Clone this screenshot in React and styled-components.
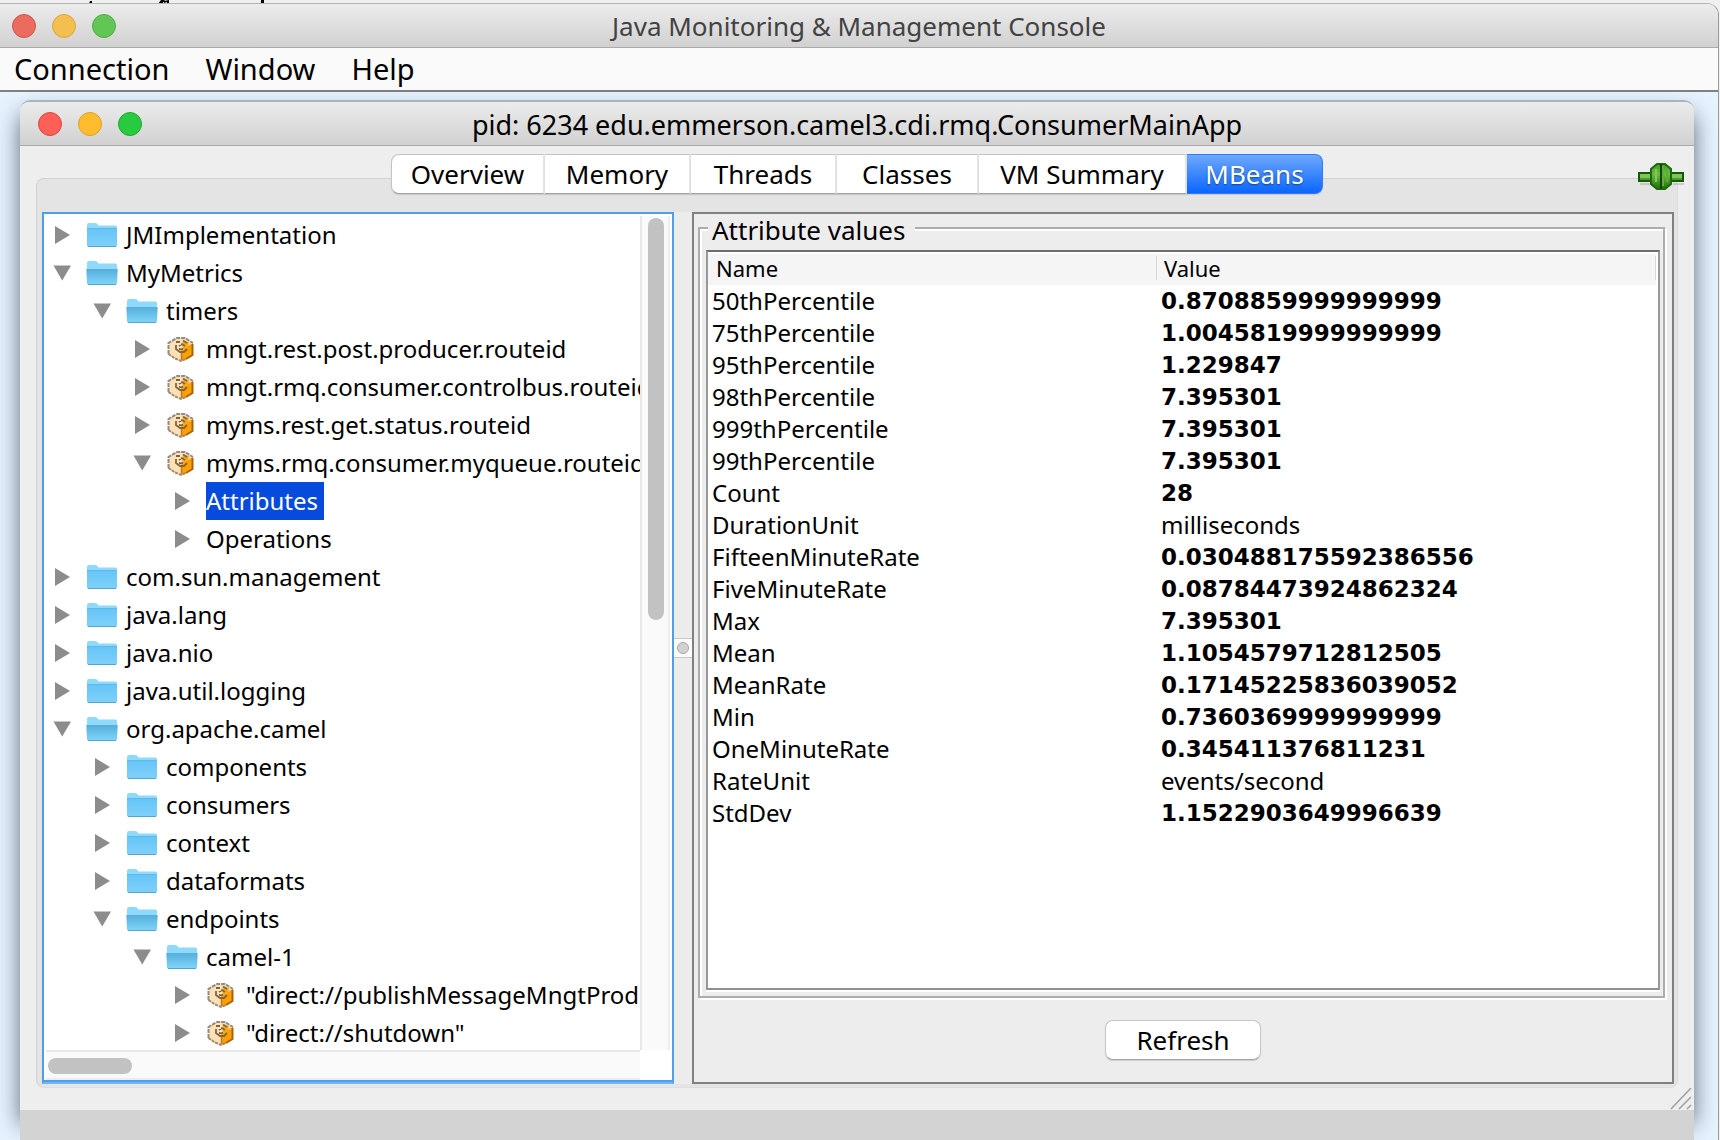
import React from "react";
import styled, { createGlobalStyle, css } from "styled-components";

const GlobalStyle = createGlobalStyle`
  * { box-sizing: border-box; }
  body {
    margin: 0;
    background: #f0f0f0;
    color: #000;
    font-family: "Noto Sans", "Open Sans", sans-serif;
    font-size: 24px;
  }
  button { font: inherit; color: inherit; }
`;

const Page = styled.div`
  display: flex;
  flex-direction: column;
  height: 100vh;
  min-width: 1200px;
  overflow: hidden;
  padding-right: 1px;
`;

const BackdropStrip = styled.svg`
  display: block;
  flex: none;
  width: 300px;
  height: 3px;
`;

const AppWindow = styled.div`
  flex: 1;
  min-height: 0;
  display: flex;
  flex-direction: column;
  border-top: 1px solid #b4b4b4;
  border-right: 1px solid #9b9b9b;
  border-radius: 0 12px 0 0;
  overflow: hidden;
  background: #e6f2fe;
`;

const TitleBar = styled.header`
  flex: none;
  display: grid;
  grid-template-columns: 160px 1fr 160px;
  align-items: center;
  height: 44px;
  padding: 0 ${(p) => (p.$inner ? "18px" : "12px")};
  background: linear-gradient(#ececec, #d1d1d1);
  border-bottom: 1px solid #aaa;
`;

const Title = styled.h1`
  margin: 0;
  padding-top: ${(p) => (p.$inner ? "2px" : "0")};
  font-size: ${(p) => (p.$inner ? "27px" : "26px")};
  line-height: 40px;
  font-weight: 400;
  text-align: center;
  white-space: nowrap;
  color: ${(p) => (p.$inner ? "#000" : "#424242")};
`;

const Lights = styled.div`
  display: flex;
  gap: 16px;
`;

const Light = styled.button`
  width: 24px;
  height: 24px;
  padding: 0;
  border-radius: 50%;
  border: 1px solid ${(p) => p.$edge};
  background: ${(p) => p.$fill};
`;

const MenuBar = styled.nav`
  flex: none;
  display: flex;
  gap: 36px;
  height: 44px;
  padding: 0 14px;
  background: #fafafa;
  border-bottom: 2px solid #808080;
`;

const MenuItem = styled.button`
  padding: 0;
  border: 0;
  background: none;
  font-size: 29px;
  line-height: 42px;
`;

const Desktop = styled.div`
  flex: 1;
  min-height: 0;
  display: flex;
  flex-direction: column;
  padding: 8px 24px 0 20px;
`;

const InnerWindow = styled.section`
  flex: 1;
  min-height: 0;
  display: flex;
  flex-direction: column;
  border-top: 2px solid #aab4be;
  border-radius: 10px 10px 0 0;
  background: #eee;
  box-shadow: 0 14px 22px rgba(20, 30, 50, 0.65);
`;

const InnerTitleBar = styled(TitleBar)`
  border-radius: 9px 9px 0 0;
`;

const Shelf = styled.div`
  flex: none;
  height: 30px;
  background: #d3d3d3;
  z-index: 1;
`;

const Body = styled.div`
  flex: 1;
  min-height: 0;
  display: flex;
  flex-direction: column;
  padding: 8px 16px 0;
`;

const TabRow = styled.div`
  flex: none;
  display: grid;
  grid-template-columns: 1fr auto 1fr;
  align-items: center;
  height: 40px;
  margin-bottom: -16px;
  z-index: 1;
`;

const Tabs = styled.div`
  grid-column: 2;
  display: flex;
  height: 40px;
`;

const Tab = styled.button`
  width: ${(p) => p.$width}px;
  height: 40px;
  padding: 0;
  border: 1px solid #c4c4c4;
  border-bottom-color: #a4a4a4;
  border-left: 0;
  border-right: 2px solid #e4e4e4;
  background: #fff;
  font-size: 26px;
  line-height: 36px;
  white-space: nowrap;
  box-shadow: 0 1px 1px rgba(0, 0, 0, 0.12);

  &:first-child {
    border-left: 1px solid #c4c4c4;
    border-radius: 8px 0 0 8px;
  }
  &:last-child {
    border-radius: 0 8px 8px 0;
  }
  ${(p) =>
    p.$selected &&
    css`
      border: 1px solid #2f7cf5;
      border-left: 0;
      background: linear-gradient(#6ea8fc, #0a66ff);
      color: #fff;
      text-shadow: 0 1px 2px rgba(0, 0, 0, 0.45);
    `}
`;

const PlugIcon = styled.svg`
  justify-self: end;
  width: 48px;
  height: 30px;
  margin: 5px -7px 0 0;
`;

const TabPanel = styled.main`
  flex: 1;
  min-height: 0;
  display: grid;
  grid-template-columns: 632px 18px minmax(0, 1fr);
  padding: 33px 3px 3px 5px;
  border: 1px solid #d2d2d2;
  border-right-color: #dcdcdc;
  border-bottom-color: #dedede;
  border-radius: 8px;
  background: #e4e4e4;
`;

const TreePane = styled.div`
  min-height: 0;
  display: grid;
  grid-template-columns: minmax(0, 1fr) 30px;
  grid-template-rows: minmax(0, 1fr) 30px;
  padding: 2px;
  border: 2px solid #4da0e8;
  border-bottom-color: #6cb8fb;
  box-shadow: inset 0 -2px 0 #4da0e8;
  background: #fff;
`;

const Tree = styled.ul`
  margin: 0;
  padding: 0;
  list-style: none;
  overflow: hidden;
`;

const TreeRow = styled.li`
  display: flex;
  align-items: center;
  height: 38px;
  padding-left: ${(p) => p.$depth * 40}px;
`;

const Twisty = styled.button`
  flex: none;
  width: 40px;
  height: 38px;
  padding: 0 0 0 6px;
  border: 0;
  background: none;
`;

const TwistyShape = styled.svg`
  display: block;
  width: 20px;
  height: 20px;
`;

const NodeIcon = styled.svg`
  flex: none;
  width: 32px;
  height: 28px;
  margin-right: 8px;
`;

const NodeLabel = styled.span`
  height: 38px;
  line-height: 38px;
  padding-right: 6px;
  white-space: nowrap;
  ${(p) =>
    p.$selected &&
    css`
      background: #064bdc;
      color: #fff;
    `}
`;

const VerticalTrack = styled.div`
  padding: 2px 4px 0 6px;
  border-left: 2px solid #e8e8e8;
  border-right: 2px solid #ededed;
  background: #fafafa;
`;

const VerticalThumb = styled.div`
  height: 402px;
  max-height: 80%;
  border-radius: 8px;
  background: #c2c2c2;
`;

const HorizontalTrack = styled.div`
  padding: 6px 2px 0;
  border-top: 2px solid #e8e8e8;
  border-bottom: 2px solid #ededed;
  background: #fafafa;
`;

const HorizontalThumb = styled.div`
  width: 84px;
  height: 16px;
  border-radius: 8px;
  background: #c2c2c2;
`;

const Divider = styled.div`
  display: flex;
  align-items: center;
  background: #ececec;
`;

const Grip = styled.div`
  flex: 1;
  display: flex;
  justify-content: center;
  align-items: center;
  height: 20px;
  border-top: 1px solid #c8c8c8;
  border-bottom: 1px solid #c8c8c8;
  background: #fcfcfc;
`;

const GripDot = styled.span`
  width: 12px;
  height: 12px;
  border-radius: 50%;
  border: 1px solid #a8a8a8;
  background: #d2d2d2;
`;

const DetailPane = styled.div`
  min-height: 0;
  display: flex;
  flex-direction: column;
  border: 2px solid #808080;
  background: #ededed;
`;

const Group = styled.fieldset`
  flex: 1;
  min-height: 0;
  min-width: 0;
  display: flex;
  flex-direction: column;
  margin: 0 7px 0 4px;
  padding: 8px 3px 6px 6px;
  border: 2px solid #adadad;
  box-shadow: 2px 2px 0 #fff, inset 2px 2px 0 #fff;
`;

const Legend = styled.legend`
  height: 28px;
  margin-left: 2px;
  padding: 4px 10px 0 4px;
  font-size: 26px;
  line-height: 24px;
  background: #ededed;
`;

const TableBox = styled.div`
  flex: 1;
  min-height: 0;
  overflow: hidden;
  padding: 2px 2px 0 0;
  border: 2px solid #989898;
  border-top-color: #6c6c6c;
  border-bottom-color: #909090;
  box-shadow: 0 2px 0 #fff;
  background: #fff;
`;

const Table = styled.table`
  width: 100%;
  table-layout: fixed;
  border-collapse: collapse;
`;

const NameHead = styled.th`
  width: 449px;
  height: 31px;
  padding: 0 0 4px;
  background: #f5f5f5;
`;

const ValueHead = styled(NameHead)`
  width: auto;
`;

const HeadLabel = styled.span`
  display: block;
  height: 24px;
  padding-left: ${(p) => (p.$first ? "8px" : "7px")};
  border-right: 1px solid #d8d8d8;
  font-size: 22px;
  font-weight: 400;
  line-height: 24px;
  text-align: left;
`;

const Cell = styled.td`
  height: 32px;
  padding: 0 0 0 4px;
  line-height: 32px;
  font-size: 24px;
  white-space: nowrap;
  ${(p) =>
    p.$numeric &&
    css`
      font-family: "DejaVu Sans", sans-serif;
      font-size: 23px;
      font-weight: 700;
    `}
`;

const Actions = styled.div`
  flex: none;
  display: flex;
  justify-content: center;
  padding: 22px 0;
`;

const RefreshButton = styled.button`
  width: 156px;
  height: 40px;
  padding: 0;
  border: 1px solid #c6c6c6;
  border-bottom-color: #a6a6a6;
  border-radius: 8px;
  background: #fff;
  box-shadow: 0 1px 1px rgba(0, 0, 0, 0.14);
  font-size: 26px;
  line-height: 36px;
`;

const StatusRow = styled.div`
  flex: none;
  display: flex;
  justify-content: flex-end;
  height: 22px;
  margin-right: -14px;
`;

const ResizeGrip = styled.svg`
  width: 22px;
  height: 22px;
`;

const nodes = [
  [0, "folder", false, "JMImplementation"],
  [0, "folder", true, "MyMetrics"],
  [1, "folder", true, "timers"],
  [2, "bean", false, "mngt.rest.post.producer.routeid"],
  [2, "bean", false, "mngt.rmq.consumer.controlbus.routeid"],
  [2, "bean", false, "myms.rest.get.status.routeid"],
  [2, "bean", true, "myms.rmq.consumer.myqueue.routeid"],
  [3, null, false, "Attributes", true],
  [3, null, false, "Operations"],
  [0, "folder", false, "com.sun.management"],
  [0, "folder", false, "java.lang"],
  [0, "folder", false, "java.nio"],
  [0, "folder", false, "java.util.logging"],
  [0, "folder", true, "org.apache.camel"],
  [1, "folder", false, "components"],
  [1, "folder", false, "consumers"],
  [1, "folder", false, "context"],
  [1, "folder", false, "dataformats"],
  [1, "folder", true, "endpoints"],
  [2, "folder", true, "camel-1"],
  [3, "bean", false, '"direct://publishMessageMngtProducer"'],
  [3, "bean", false, '"direct://shutdown"'],
];

const attributes = [
  ["50thPercentile", "0.8708859999999999"],
  ["75thPercentile", "1.0045819999999999"],
  ["95thPercentile", "1.229847"],
  ["98thPercentile", "7.395301"],
  ["999thPercentile", "7.395301"],
  ["99thPercentile", "7.395301"],
  ["Count", "28"],
  ["DurationUnit", "milliseconds"],
  ["FifteenMinuteRate", "0.030488175592386556"],
  ["FiveMinuteRate", "0.08784473924862324"],
  ["Max", "7.395301"],
  ["Mean", "1.1054579712812505"],
  ["MeanRate", "0.17145225836039052"],
  ["Min", "0.7360369999999999"],
  ["OneMinuteRate", "0.345411376811231"],
  ["RateUnit", "events/second"],
  ["StdDev", "1.1522903649996639"],
];

const tabs = [
  ["Overview", 154],
  ["Memory", 146],
  ["Threads", 146],
  ["Classes", 142],
  ["VM Summary", 208],
  ["MBeans", 136],
];

function FolderIcon({ open }) {
  return (
    <NodeIcon viewBox="0 0 32 28" aria-hidden="true">
      <defs>
        <linearGradient id="folderFront" x1="0" y1="0" x2="0" y2="1">
          <stop offset="0" stopColor="#66c5f8" />
          <stop offset="1" stopColor="#7fd0f9" />
        </linearGradient>
        <linearGradient id="folderOpen" x1="0" y1="0" x2="0" y2="1">
          <stop offset="0" stopColor="#55aeda" />
          <stop offset="1" stopColor="#7fd5fb" />
        </linearGradient>
      </defs>
      <path
        d="M1 4Q1 2 3 2H9.500Q10.500 2 11.300 2.900L12.600 4.500H29.500Q31 4.500 31 6V24Q31 25.500 29.500 25.500H2.500Q1 25.500 1 24Z"
        fill="#8fdafc"
      />
      {open ? (
        <path
          d="M0.3 10H31.7L31 24Q30.8 25.5 29.5 25.5H2.5Q1.2 25.5 1 24Z"
          fill="url(#folderOpen)"
        />
      ) : (
        <path d="M1 8H31V24Q31 25.5 29.5 25.5H2.5Q1 25.5 1 24Z" fill="url(#folderFront)" />
      )}
      {!open && <path d="M1 7.5H31" stroke="#5fb9e8" />}
      <path d="M2 25.5H30" stroke="#56a6cc" />
    </NodeIcon>
  );
}

function BeanIcon() {
  return (
    <NodeIcon viewBox="0 0 32 28" aria-hidden="true">
      <path d="M11 3H19L27 8V20L20 24.500L15 26L9 24L2.500 20V8Z" fill="#fbe0b8" />
      <path d="M15 15L27 8V20L20 24.500L15 26Z" fill="#ff9f00" />
      <path d="M17 6L23 7L22 13L16 16Z" fill="#f7a81c" />
      <path d="M15.500 17V25" stroke="#c07a14" strokeWidth="1.500" />
      <path d="M26.500 9V20L20 24" fill="none" stroke="#a8640c" strokeWidth="2" />
      <path
        d="M2.500 19V8L11 3H19L27 8"
        fill="none"
        stroke="#938b80"
        strokeWidth="2"
        strokeDasharray="4 1"
      />
      <path d="M2.500 19L9 23.500L15 26L20 24" fill="none" stroke="#a08a6c" strokeWidth="2" strokeDasharray="3 1" />
      <path
        d="M10 7H14M17 5.500L21 8M10 10V14L14 17H18L21 14M13 11L16 9L19 11M13 14H17"
        fill="none"
        stroke="#80653c"
        strokeWidth="1.800"
      />
      <path d="M12 9H15M14 12.500H16" stroke="#fff0d4" strokeWidth="1.500" />
    </NodeIcon>
  );
}

function WindowLights({ vivid }) {
  const palette = vivid
    ? [["#fe5f57", "#e0443e"], ["#febc2e", "#dfa023"], ["#28cb40", "#1aab29"]]
    : [["#ec6b5f", "#d2544b"], ["#f5bf4f", "#dba53c"], ["#62c654", "#4fae42"]];
  const names = ["Close", "Minimize", "Zoom"];
  return (
    <Lights>
      {palette.map(([fill, edge], i) => (
        <Light key={names[i]} $fill={fill} $edge={edge} aria-label={names[i]} />
      ))}
    </Lights>
  );
}

function TreeNode({ depth, icon, open, label, selected }) {
  return (
    <TreeRow role="treeitem" aria-level={depth + 1} aria-expanded={open} aria-selected={!!selected} $depth={depth}>
      <Twisty aria-label={(open ? "Collapse " : "Expand ") + label}>
        <TwistyShape viewBox="0 0 20 20">
          <path d={open ? "M1.500 2.500H19L10.200 17.500Z" : "M3 1V19L18 10Z"} fill="#8c8c8c" />
        </TwistyShape>
      </Twisty>
      {icon === "folder" && <FolderIcon open={open} />}
      {icon === "bean" && <BeanIcon />}
      <NodeLabel $selected={selected}>{label}</NodeLabel>
    </TreeRow>
  );
}

export default function App() {
  return (
    <>
      <GlobalStyle />
      <Page>
        <BackdropStrip viewBox="0 0 300 3" aria-hidden="true">
          <path d="M90 1H92V3L89 4ZM158 4L161 0H165L162 4ZM164 1L169 0V4H167V2L164 3ZM261 0H264V4H261Z" />
        </BackdropStrip>
        <AppWindow>
          <TitleBar>
            <WindowLights />
            <Title>Java Monitoring &amp; Management Console</Title>
          </TitleBar>
          <MenuBar>
            <MenuItem>Connection</MenuItem>
            <MenuItem>Window</MenuItem>
            <MenuItem>Help</MenuItem>
          </MenuBar>
          <Desktop>
            <InnerWindow>
              <InnerTitleBar $inner>
                <WindowLights vivid />
                <Title as="h2" $inner>
                  pid: 6234 edu.emmerson.camel3.cdi.rmq.ConsumerMainApp
                </Title>
              </InnerTitleBar>
              <Body>
                <TabRow>
                  <Tabs role="tablist">
                    {tabs.map(([name, width]) => (
                      <Tab
                        key={name}
                        role="tab"
                        aria-selected={name === "MBeans"}
                        $width={width}
                        $selected={name === "MBeans"}
                      >
                        {name}
                      </Tab>
                    ))}
                  </Tabs>
                  <PlugIcon viewBox="0 0 48 30" aria-label="Connected">
                    <defs>
                      <linearGradient id="plugBody" x1="0" y1="0" x2="0" y2="1">
                        <stop offset="0" stopColor="#3f9c22" />
                        <stop offset="0.400" stopColor="#6dbb40" />
                        <stop offset="1" stopColor="#236d0a" />
                      </linearGradient>
                    </defs>
                    <path d="M3 21H14V23H3ZM36 21H47V23H36Z" fill="#00000022" />
                    <rect x="2" y="11" width="44" height="8" fill="#7fc45c" stroke="#145a08" strokeWidth="2" />
                    <path d="M3 17H45" stroke="#4b9a2c" strokeWidth="2" />
                    <path
                      d="M20 2H28L34 7V22L28 27H20L14 22V7Z"
                      fill="url(#plugBody)"
                      stroke="#1d6a0c"
                      strokeWidth="2"
                    />
                    <path d="M19 7V20" stroke="#84cc55" strokeWidth="2" />
                    <path d="M30 8V20" stroke="#5fae36" strokeWidth="2" />
                    <path d="M24 2V27" stroke="#0d4705" strokeWidth="2" />
                    <path d="M26 4V24" stroke="#5fae36" strokeWidth="2" />
                  </PlugIcon>
                </TabRow>
                <TabPanel role="tabpanel" aria-label="MBeans">
                  <TreePane>
                    <Tree role="tree" aria-label="MBeans">
                      {nodes.map(([depth, icon, open, label, selected]) => (
                        <TreeNode key={label} depth={depth} icon={icon} open={open} label={label} selected={selected} />
                      ))}
                    </Tree>
                    <VerticalTrack>
                      <VerticalThumb />
                    </VerticalTrack>
                    <HorizontalTrack>
                      <HorizontalThumb />
                    </HorizontalTrack>
                  </TreePane>
                  <Divider>
                    <Grip>
                      <GripDot />
                    </Grip>
                  </Divider>
                  <DetailPane>
                    <Group>
                      <Legend>Attribute values</Legend>
                      <TableBox>
                        <Table>
                          <thead>
                            <tr>
                              <NameHead scope="col">
                                <HeadLabel $first>Name</HeadLabel>
                              </NameHead>
                              <ValueHead scope="col">
                                <HeadLabel>Value</HeadLabel>
                              </ValueHead>
                            </tr>
                          </thead>
                          <tbody>
                            {attributes.map(([name, value]) => (
                              <tr key={name}>
                                <Cell>{name}</Cell>
                                <Cell $numeric={!Number.isNaN(Number(value))}>{value}</Cell>
                              </tr>
                            ))}
                          </tbody>
                        </Table>
                      </TableBox>
                    </Group>
                    <Actions>
                      <RefreshButton>Refresh</RefreshButton>
                    </Actions>
                  </DetailPane>
                </TabPanel>
                <StatusRow>
                  <ResizeGrip viewBox="0 0 22 22" aria-hidden="true">
                    <path d="M1 21L21 0M9 21L21 9M17 21L21 17" stroke="#a0a0a0" strokeWidth="1.500" />
                  </ResizeGrip>
                </StatusRow>
              </Body>
            </InnerWindow>
            <Shelf />
          </Desktop>
        </AppWindow>
      </Page>
    </>
  );
}
